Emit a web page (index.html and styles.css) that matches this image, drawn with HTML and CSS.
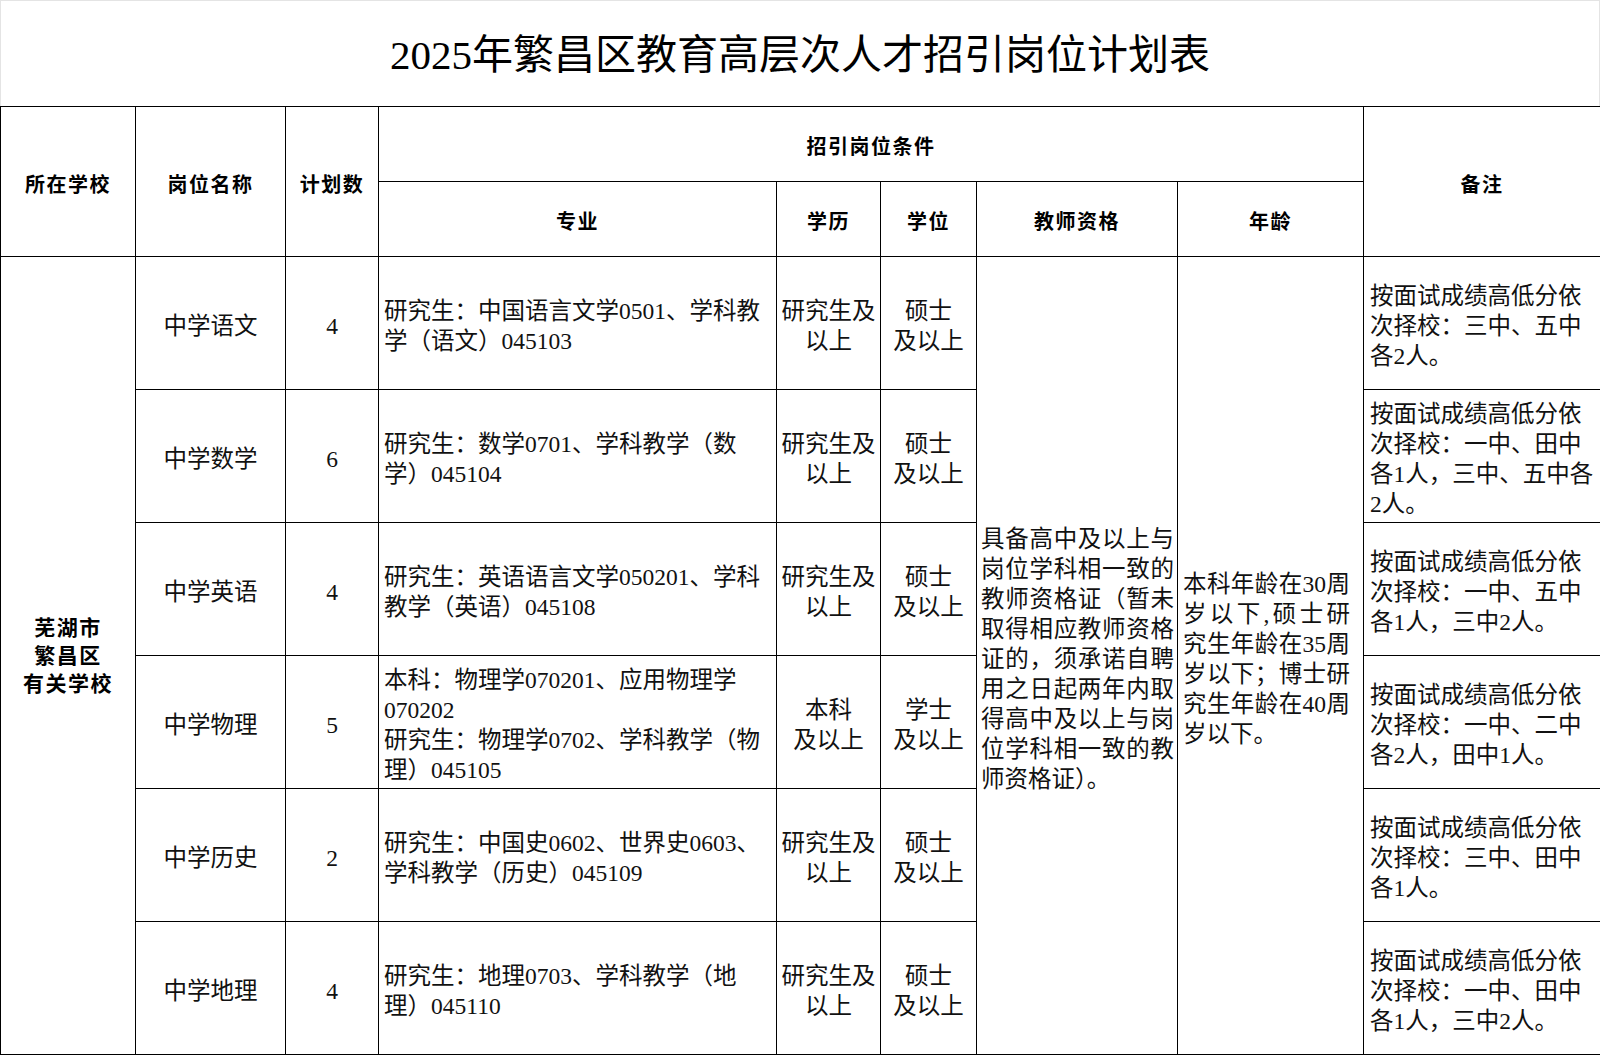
FILE: index.html
```html
<!DOCTYPE html>
<html lang="zh-CN">
<head>
<meta charset="utf-8">
<title>2025年繁昌区教育高层次人才招引岗位计划表</title>
<link rel="stylesheet" href="styles.css">
</head>
<body>
<div class="page">
  <div class="title-box">
    <h1 class="title">2025年繁昌区教育高层次人才招引岗位计划表</h1>
  </div>
  <table class="plan">
    <colgroup>
      <col class="c-school">
      <col class="c-post">
      <col class="c-num">
      <col class="c-major">
      <col class="c-edu">
      <col class="c-degree">
      <col class="c-cert">
      <col class="c-age">
      <col class="c-note">
    </colgroup>
    <thead>
      <tr class="h-row">
        <th rowspan="2">所在学校</th>
        <th rowspan="2">岗位名称</th>
        <th rowspan="2">计划数</th>
        <th colspan="5">招引岗位条件</th>
        <th rowspan="2">备注</th>
      </tr>
      <tr class="h-row">
        <th>专业</th>
        <th>学历</th>
        <th>学位</th>
        <th>教师资格</th>
        <th>年龄</th>
      </tr>
    </thead>
    <tbody>
      <tr class="d-row">
        <td rowspan="6" class="school">芜湖市<br>繁昌区<br>有关学校</td>
        <td class="center">中学语文</td>
        <td class="center">4</td>
        <td class="major">研究生：中国语言文学0501、学科教学（语文）045103</td>
        <td class="center">研究生及以上</td>
        <td class="center">硕士<br>及以上</td>
        <td rowspan="6" class="cert">具备高中及以上与岗位学科相一致的教师资格证（暂未取得相应教师资格证的，须承诺自聘用之日起两年内取得高中及以上与岗位学科相一致的教师资格证）。</td>
        <td rowspan="6" class="age">本科年龄在30周岁以下,硕士研究生年龄在35周岁以下；博士研究生年龄在40周岁以下。</td>
        <td class="note">按面试成绩高低分依次择校：三中、五中各2人。</td>
      </tr>
      <tr class="d-row">
        <td class="center">中学数学</td>
        <td class="center">6</td>
        <td class="major">研究生：数学0701、学科教学（数学）045104</td>
        <td class="center">研究生及以上</td>
        <td class="center">硕士<br>及以上</td>
        <td class="note">按面试成绩高低分依次择校：一中、田中各1人，三中、五中各2人。</td>
      </tr>
      <tr class="d-row">
        <td class="center">中学英语</td>
        <td class="center">4</td>
        <td class="major">研究生：英语语言文学050201、学科教学（英语）045108</td>
        <td class="center">研究生及以上</td>
        <td class="center">硕士<br>及以上</td>
        <td class="note">按面试成绩高低分依次择校：一中、五中各1人，三中2人。</td>
      </tr>
      <tr class="d-row">
        <td class="center">中学物理</td>
        <td class="center">5</td>
        <td class="major">本科：物理学070201、应用物理学070202<br>研究生：物理学0702、学科教学（物理）045105</td>
        <td class="center">本科<br>及以上</td>
        <td class="center">学士<br>及以上</td>
        <td class="note">按面试成绩高低分依次择校：一中、二中各2人，田中1人。</td>
      </tr>
      <tr class="d-row">
        <td class="center">中学历史</td>
        <td class="center">2</td>
        <td class="major">研究生：中国史0602、世界史0603、学科教学（历史）045109</td>
        <td class="center">研究生及以上</td>
        <td class="center">硕士<br>及以上</td>
        <td class="note">按面试成绩高低分依次择校：三中、田中各1人。</td>
      </tr>
      <tr class="d-row">
        <td class="center">中学地理</td>
        <td class="center">4</td>
        <td class="major">研究生：地理0703、学科教学（地理）045110</td>
        <td class="center">研究生及以上</td>
        <td class="center">硕士<br>及以上</td>
        <td class="note">按面试成绩高低分依次择校：一中、田中各1人，三中2人。</td>
      </tr>
    </tbody>
  </table>
</div>
</body>
</html>
```

FILE: styles.css
```css
html, body {
  margin: 0;
  padding: 0;
  background: #ffffff;
}

body {
  font-family: "Liberation Serif", "Noto Sans CJK SC", serif;
  color: #111111;
}

.page {
  width: 1600px;
}

.title-box {
  box-sizing: border-box;
  height: 106px;
  border: 1px solid #e4e4e4;
  border-bottom: none;
  display: flex;
  align-items: center;
  justify-content: center;
  padding-top: 4px;
}

.title {
  margin: 0;
  font-size: 41px;
  font-weight: 400;
  line-height: 1;
  color: #000000;
}

.plan {
  width: 1600px;
  border-collapse: collapse;
  table-layout: fixed;
}

.c-school { width: 135px; }
.c-post { width: 150px; }
.c-num { width: 93px; }
.c-major { width: 398px; }
.c-edu { width: 104px; }
.c-degree { width: 96px; }
.c-cert { width: 201px; }
.c-age { width: 186px; }
.c-note { width: 237px; }

.plan th,
.plan td {
  border: 1px solid #000000;
  padding: 6px 2px 0;
  vertical-align: middle;
}

.plan th {
  font-size: 20px;
  font-weight: 700;
  letter-spacing: 1.5px;
  line-height: 26px;
  text-align: center;
  color: #000000;
}

.h-row {
  height: 75px;
}

.d-row {
  height: 133px;
}

.plan td {
  font-size: 23.5px;
  line-height: 30px;
}

.center {
  text-align: center;
}

.plan td.school {
  text-align: center;
  font-size: 21px;
  font-weight: 700;
  letter-spacing: 1.5px;
  line-height: 28px;
  padding: 0 2px;
  color: #000000;
}

.plan td.major {
  text-align: left;
  padding: 6px 6px 0 5px;
}

.plan td.cert {
  text-align: justify;
  padding: 6px 3px 0 4px;
}

.plan td.age {
  text-align: justify;
  padding: 6px 13px 0 5px;
}

.plan td.note {
  text-align: left;
  padding: 6px 1px 0 6px;
}
```
